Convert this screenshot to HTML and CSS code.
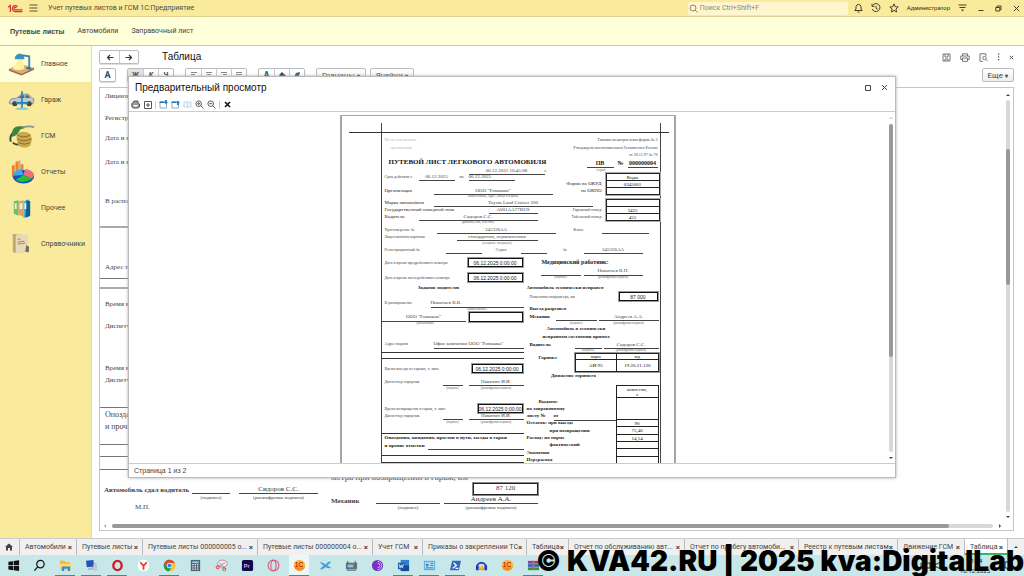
FILE: index.html
```html
<!DOCTYPE html>
<html lang="ru">
<head>
<meta charset="utf-8">
<title>Учет путевых листов и ГСМ</title>
<link rel="stylesheet" href="styles.css">
</head>
<body>
<header class="titlebar">
  <svg class="logo" viewBox="0 0 16 9"><g fill="none" stroke="#d9332e" stroke-width="1.2"><path d="M1 3.2 3.4 1.5V8"/><path d="M10.5 2.6A3 3 0 1 0 8 7.6H15.5"/><path d="M9.4 4A1.3 1.3 0 1 0 8.2 5.9H15.5"/></g></svg>
  <button class="plain" aria-label="Меню"><svg width="9" height="8" viewBox="0 0 9 8"><path d="M.5 1h8M.5 4h8M.5 7h8" stroke="#5b5640" fill="none"/></svg></button>
  <span class="app-name">Учет путевых листов и ГСМ 1С:Предприятие</span>
  <label class="search"><svg width="9" height="9" viewBox="0 0 9 9" fill="none" stroke="#8f8869"><circle cx="4" cy="4" r="3"/><path d="m6 6 2.5 2.5"/></svg><input type="text" placeholder="Поиск Ctrl+Shift+F" aria-label="Поиск"></label>
  <div class="title-tools">
    <button class="plain" aria-label="Уведомления"><svg width="9" height="10" viewBox="0 0 9 10" fill="none" stroke="#45412f"><path d="M.8 7.5h7.4L7 6V3.700Q6.500 1.500 4.500 1.300 2.500 1.500 2 3.700V6zM3.500 9h2"/></svg></button>
    <button class="plain" aria-label="История"><svg width="10" height="10" viewBox="0 0 10 10" fill="none" stroke="#45412f"><path d="M1.500 2.500A4 4 0 1 1 1.200 6M1 .8v2.500h2.500M5 2.800V5.200l1.800 1.200"/></svg></button>
    <button class="plain" aria-label="Избранное"><svg width="10" height="10" viewBox="0 0 10 10" fill="none" stroke="#45412f"><path d="m5 .9 1.200 2.800 3 .3-2.300 2 .7 3L5 7.400 2.400 9l.7-3L.8 4l3-.3z"/></svg></button>
    <span class="user">Администратор</span>
    <button class="plain" aria-label="Настройки"><svg width="9" height="8" viewBox="0 0 9 8"><path d="M.5 1h8M1.500 3.500h6" stroke="#45412f"/><path d="M3 5.500h3L4.500 7.500z" fill="#45412f"/></svg></button>
  </div>
  <div class="window-tools">
    <button class="plain" aria-label="Свернуть"><svg width="6" height="8" viewBox="0 0 6 8"><path d="M.5 6.500h5" stroke="#45412f"/></svg></button>
    <button class="plain" aria-label="Развернуть"><svg width="7" height="7" viewBox="0 0 7 7" fill="none" stroke="#45412f"><path d="M.8 2.500h4v3.500h-4zM2 2V1h4v3.500H5"/></svg></button>
    <button class="plain" aria-label="Закрыть"><svg width="7" height="7" viewBox="0 0 7 7"><path d="m1 1 5 5M6 1 1 6" stroke="#45412f"/></svg></button>
  </div>
</header>
<nav class="topnav"><a class="current" href="#lists">Путевые листы</a><a href="#cars">Автомобили</a><a href="#fuel">Заправочный лист</a></nav>

<main class="workspace">
  <nav class="sections">
    <a class="current" href="#main"><svg viewBox="0 0 28 24"><path d="m1 17 12-5 14 4-13 6z" fill="#dfab77"/><path d="m1 17 13 5v2L1 19zM14 22l13-6v2l-13 6z" fill="#9d6d46"/><path d="M11 7 5 17q6 3 12 0L15 7z" fill="#fff49b"/><path d="M12 1q-5 1-5 6h10q0-5-5-6z" fill="#3e8fc2"/><path d="M14 3l8 1v12" stroke="#4386ad" stroke-width="2" fill="none"/><path d="m19 16 5 1" stroke="#32698b" stroke-width="2"/></svg><span>Главное</span></a>
    <a href="#garage"><svg viewBox="0 0 28 24"><path d="m1 15 2-4 6-1 5-4h7l4 4 2 1-1 5H2z" fill="#c3c9ca" stroke="#8b9295"/><path d="m10 10 4-3h3v3zM18 7h3l2 3h-5z" fill="#536a78"/><circle cx="7" cy="16" r="2.600" fill="#3e4447"/><circle cx="22" cy="16" r="2.600" fill="#3e4447"/><path d="M14.500 3v18M8 15h13" stroke="#1687c6" stroke-width="1.700"/><path d="m7 22 3-2h9l3 2z" fill="#83c8dc"/></svg><span>Гараж</span></a>
    <a href="#gsm"><svg viewBox="0 0 28 24"><path d="M3 18Q1 12 6 8M5 19q7 5 8-3" stroke="#3d4c41" stroke-width="2" fill="none"/><path d="M4 9q1-7 7-7l6 0v2l-4 1-4 6-5 2z" fill="#3c853b"/><path d="M15 3q8-2 12 0" stroke="#8b9397" stroke-width="2" fill="none"/><path d="M9 10q7-5 14 0l2 5-2 7q-6 4-12 0L9 16z" fill="#caa84b"/><path d="M10 11q6 4 13 0M10 15q6 4 14 0M11 19q6 3 12 0" stroke="#826b2a" fill="none"/></svg><span>ГСМ</span></a>
    <a href="#reports"><svg viewBox="0 0 28 24"><path d="M4 5h3v12H4zM8 1h3v16H8zM13 4h3v11h-3z" fill="#f4811f"/><path d="M7 3h1v14H7zM11 0h2v16h-2z" fill="#b8b1a8"/><ellipse cx="16" cy="17" rx="11" ry="7" fill="#1650bd"/><path d="M16 15 5 16q0-5 9-7z" fill="#35a9f6"/><path d="m16 15 2-6q8 1 9 6l-2 4z" fill="#f36c7e"/><path d="m16 15 9 4q-9 6-17 1z" fill="#22bf38"/></svg><span>Отчеты</span></a>
    <a href="#other"><svg viewBox="0 0 28 24"><path d="m6 5 5-1v16l-5-2z" fill="#71bd6c"/><path d="m11 5 5-1v17l-5-2z" fill="#e2a35b"/><path d="m16 5 6-2v18l-6 1z" fill="#4eb6de"/><path d="m19 4 4 1v15l-5 2z" fill="#08639d"/><path d="M7 7h2v6H7zM12 7h3v6h-3zM17 7h2v6h-2z" fill="#e9f1dc"/></svg><span>Прочее</span></a>
    <a href="#refs"><svg viewBox="0 0 28 24"><path d="m5 2 14 1 3 17-16 1z" fill="#ac9565"/><path d="m7 3 14-1v17L7 22z" fill="#e9dab7"/><path d="M5 2h3v19l-3-1z" fill="#bda878"/><path d="m10 10 7-1M10 12l8-1M10 7l3 0" stroke="#9b8661"/><path d="m19 13 3 2-1 6-3-2z" fill="#716d5e"/></svg><span>Справочники</span></a>
  </nav>

  <section class="content">
    <div class="form-head">
      <div class="group"><button aria-label="Назад"><svg width="8" height="7" viewBox="0 0 8 7"><path d="M7.500 3.500h-6M4 1 1.500 3.500 4 6" stroke="#333" stroke-width="1.200" fill="none"/></svg></button><button aria-label="Вперед"><svg width="8" height="7" viewBox="0 0 8 7"><path d="M.5 3.500h6M4 1l2.500 2.500L4 6" stroke="#333" stroke-width="1.200" fill="none"/></svg></button></div>
      <h1>Таблица</h1>
      <div class="form-tools">
        <button class="plain" aria-label="Сохранить"><svg width="9" height="9" viewBox="0 0 9 9" fill="none" stroke="#777"><path d="M1 1h7v7H1zM3 1v3h3V1M3 8V6h3v2"/></svg></button>
        <button class="plain" aria-label="Печать"><svg width="10" height="9" viewBox="0 0 10 9" fill="none" stroke="#777"><path d="M2.500 3V.8h5V3M2 6.500H.8V3h8.400v3.500H8M2.500 5h5v3.300h-5z"/></svg></button>
        <button class="plain" aria-label="Просмотр"><svg width="9" height="9" viewBox="0 0 9 9" fill="none" stroke="#777"><path d="M4 8.300H1V.8h6v2"/><circle cx="5.500" cy="5" r="1.700"/><path d="m6.800 6.300 2 2"/></svg></button>
        <button class="plain" aria-label="Еще действия"><svg width="3" height="8" viewBox="0 0 3 8"><path d="M1 .5h1.200v1.200H1zM1 3.300h1.200v1.200H1zM1 6.100h1.200v1.200H1z" fill="#444"/></svg></button>
        <button class="plain" aria-label="Закрыть форму"><svg width="5" height="5" viewBox="0 0 5 5"><path d="m.8.8 3.400 3.400m0-3.400L.8 4.200" stroke="#555"/></svg></button>
      </div>
    </div>
    <div class="format-bar">
      <div class="group"><button class="font-a">A</button></div>
      <div class="group three"><button class="pressed">Ж</button><button><i>К</i></button><button><u>Ч</u></button></div>
      <div class="group four">
        <button aria-label="Влево"><svg width="6" height="7" viewBox="0 0 6 7"><path d="M0 .5h6M0 2.500h4M0 4.500h6M0 6.500h4" stroke="#888"/></svg></button>
        <button aria-label="По центру"><svg width="6" height="7" viewBox="0 0 6 7"><path d="M0 .5h6M1 2.500h4M0 4.500h6M1 6.500h4" stroke="#888"/></svg></button>
        <button aria-label="Вправо"><svg width="6" height="7" viewBox="0 0 6 7"><path d="M0 .5h6M2 2.500h4M0 4.500h6M2 6.500h4" stroke="#888"/></svg></button>
        <button aria-label="По ширине"><svg width="6" height="7" viewBox="0 0 6 7"><path d="M0 .5h6M0 2.500h6M0 4.500h6M0 6.500h6" stroke="#888"/></svg></button>
      </div>
      <div class="group three"><button class="font-a">A</button><button aria-label="Цвет фона"><svg width="8" height="8" viewBox="0 0 8 8"><path d="m1 4 3-3 3 3-3 3z" fill="#164f7c"/><circle cx="6.500" cy="4.500" r="1.200" fill="#d33"/></svg></button><button aria-label="Кисть"><svg width="8" height="8" viewBox="0 0 8 8"><path d="m1 6 2-4 4-1-1 4-4 2z" fill="#25608a"/></svg></button></div>
      <button class="drop">Границы <b>▾</b></button><button class="drop">Ячейки <b>▾</b></button>
      <button class="drop more">Еще <b>▾</b></button>
    </div>
    <div class="document">
      <div class="doc-body">
        <div class="doc-left">
          <p class="d12">Лицензионная</p><p class="d22">Регистрационный</p><p class="d20">Дата и время</p><p class="d24">Дата и время</p><p class="d39">В распоряжение</p><p class="d22 ruled thick-line"></p>
          <p class="d44">Адрес подачи</p><p class="d7 ruled"></p><p class="d10 ruled thick-line"></p><p class="d20">Время выезда</p><p class="d22">Диспетчер</p><p class="d42">Время возвр.</p><p class="d12">Диспетчер</p><p class="d23 ruled"></p><p class="d12 large">Опоздания</p><p class="d12 large">и прочие</p><p class="d13 ruled"></p><p class="d12 ruled"></p><p class="d13 ruled"></p>
        </div>
        <div class="doc-foot">
          <div class="foot-left">
            <b>Автомобиль сдал водитель</b><div class="sig"><span class="value"></span><small>(подпись)</small></div><div class="sig"><span class="value">Сидоров С.С.</span><small>(расшифровка подписи)</small></div>
            <span class="stamp">М.П.</span>
          </div>
          <div class="foot-right">
            <span class="odo">метра при возвращении в гараж, км</span><span class="odo-box">87 120</span>
            <b>Механик</b><div class="sig"><span class="value"></span><small>(подпись)</small></div><div class="sig"><span class="value">Андреев А.А.</span><small>(расшифровка подписи)</small></div>
          </div>
        </div>
      </div>
      <div class="vbar"><i class="up"></i><div class="track"><div class="thumb doc-thumb"></div></div><i class="down"></i></div>
      <div class="hbar"><i class="left"></i><div class="track"><div class="thumb"></div></div><i class="right"></i></div>
    </div>
  </section>

  <section class="dialog" role="dialog" aria-labelledby="dlg-title">
    <header class="dlg-head"><h2 id="dlg-title">Предварительный просмотр</h2>
      <button class="plain" aria-label="Развернуть окно"><svg width="6" height="6" viewBox="0 0 6 6"><path d="M.5.5h5v5h-5z" fill="none" stroke="#444"/></svg></button>
      <button class="plain" aria-label="Закрыть окно"><svg width="7" height="7" viewBox="0 0 7 7"><path d="m1 1 5 5M6 1 1 6" stroke="#444"/></svg></button>
    </header>
    <div class="dlg-tools">
      <button class="plain" aria-label="Печать"><svg width="9" height="9" viewBox="0 0 9 9"><path d="M2 2.500 3 1h4v2l1.500 1v3L7 8H2L.8 6.500v-3z" fill="#999" stroke="#555"/><path d="M2.500 5h4v1.500h-4z" fill="#fff"/></svg></button>
      <button class="plain" aria-label="Параметры страницы"><svg width="8" height="8" viewBox="0 0 8 8"><path d="M.5.5h7v7h-7zM4 2v4M2 4h4" fill="none" stroke="#555"/></svg></button>
      <span class="sep"></span>
      <button class="plain" aria-label="Следующая"><svg width="9" height="9" viewBox="0 0 9 9"><path d="M1 2h6.500v6H1z" fill="#fff" stroke="#8badc4"/><path d="M.5 1.500h5v1.500h-5z" fill="#2877ad"/><path d="M6 0h2v2h1L7 4.500 5 2h1z" fill="#2581c2"/></svg></button>
      <button class="plain" aria-label="Предыдущая"><svg width="9" height="9" viewBox="0 0 9 9"><path d="M1 2h6.500v6H1z" fill="#fff" stroke="#8badc4"/><path d="M.5 1.500h5v1.500h-5z" fill="#2877ad"/><path d="M6 5h2V3h1L7 .5 5 3h1z" fill="#2581c2"/></svg></button>
      <button class="plain" aria-label="Две страницы"><svg width="9" height="9" viewBox="0 0 9 9"><path d="M1 2h7v5H1zM4.500 2v5" fill="#f0f8fc" stroke="#b8d8e9"/></svg></button>
      <button class="plain" aria-label="Увеличить"><svg width="9" height="9" viewBox="0 0 9 9" fill="none" stroke="#53606b"><circle cx="3.700" cy="3.700" r="2.800"/><path d="m5.800 5.800 2.700 2.700M2.200 3.700h3M3.700 2.200v3"/></svg></button>
      <button class="plain" aria-label="Уменьшить"><svg width="9" height="9" viewBox="0 0 9 9" fill="none" stroke="#53606b"><circle cx="3.700" cy="3.700" r="2.800"/><path d="m5.800 5.800 2.700 2.700M2.200 3.700h3"/></svg></button>
      <span class="sep"></span>
      <button class="plain" aria-label="Закрыть просмотр"><svg width="7" height="7" viewBox="0 0 7 7"><path d="m1 1 5 5M6 1 1 6" stroke="#111" stroke-width="1.600"/></svg></button>
    </div>
    <div class="preview">
      <div class="canvas">
        <article class="paper"><div class="form"><div class="crop"></div>

          <div class="head">
            <div>
              <p class="r7 faint in">Место для штампа</p><p class="r8 faint in2">организации</p><p class="r6"></p>
              <p class="r10 title">ПУТЕВОЙ ЛИСТ ЛЕГКОВОГО АВТОМОБИЛЯ</p>
              <div class="row r6 g-stamp"><i></i><span class="f">06.12.2025 10:45:08</span><span>г.</span></div>
            </div>
            <div class="head-right">
              <p class="r7">Типовая межотраслевая форма № 3</p><p class="r8">Утверждена постановлением Госкомстата России</p><p class="r7">от 28.11.97 № 78</p>
              <div class="row r9 g-number"><b class="f">ПВ</b><b>№</b><b class="f">000000004</b></div><p class="cap serial">(серия)</p>
            </div>
          </div>

          <div class="with-codes">
            <div>
              <div class="row r7 g-period"><span>Срок действия с</span><span class="f">06.12.2025</span><span class="c">по</span><span class="f start">06.12.2025</span></div>
              <p class="r7 strong right">Форма по ОКУД</p>
              <div class="row r6 g-org"><span class="strong">Организация</span><span class="f">ООО "Ромашка"</span><span class="strong right">по ОКПО</span></div>
              <div class="row r6 g-org cap"><i></i><span>(наименование, адрес, номер телефона)</span></div>
            </div>
            <table class="codes"><tr class="thin"><td>Коды</td></tr><tr><td>0345001</td></tr><tr><td></td></tr></table>
          </div>

          <div class="with-codes">
            <div>
              <div class="row r7 g-brand"><span class="strong">Марка автомобиля</span><span class="f">Toyota Land Cruiser 200</span></div>
              <div class="row r7 g-plate"><span class="strong">Государственный номерной знак</span><span class="f">А001АА77RUS</span><span class="right">Гаражный номер</span></div>
              <div class="row r6 g-driver"><span class="strong">Водитель</span><span class="f">Сидоров С.С.</span><span class="right">Табельный номер</span></div>
              <div class="row r7 g-driver cap"><i></i><span>(фамилия, имя, отчество)</span></div>
            </div>
            <table class="codes"><tr><td></td></tr><tr><td>3425</td></tr><tr><td>455</td></tr></table>
          </div>

          <div class="row r7 g-licence"><span>Удостоверение №</span><span class="f">345326АА</span><span class="c">Класс</span><span class="f"></span></div>
          <div class="row r7 g-card"><span>Лицензионная карточка</span><span class="f">стандартная, ограниченная</span></div>
          <div class="row r6 g-card cap"><i></i><span>(ненужное зачеркнуть)</span></div>
          <div class="row r7 g-reg"><span>Регистрационный №</span><span class="f"></span><span class="c">Серия</span><span class="f"></span><span class="c">№</span><span class="f">345326АА</span></div>

          <div class="halves">
            <div>
              <div class="row r9 g-date"><span>Дата и время предрейсового осмотра</span><span class="box">06.12.2025 0:00:00</span></div>
              <p class="r6"></p>
              <div class="row r9 g-date"><span>Дата и время послерейсового осмотра</span><span class="box">06.12.2025 0:00:00</span></div>
              <p class="r2"></p><p class="r9 heading task">Задание водителю</p><p class="r5"></p>
              <div class="row r8 g-order"><span>В распоряжение</span><span class="f start">Никитаев В.В.</span></div>
              <div class="row r6 g-order cap"><i></i><span>(наименование)</span></div>
              <div class="row r8 g-company"><span class="f">ООО "Ромашка"</span><i></i><span class="box"></span></div>
              <div class="row r5 g-company cap"><span>(организация)</span></div><p class="r14"></p>
              <div class="row r8 g-address"><span>Адрес подачи</span><span class="f start">Офис компании ООО "Ромашка"</span></div>
              <p class="r6 line"></p><p class="r6 line"></p><p class="r5"></p>
              <div class="row r8 g-leave"><span>Время выезда из гаража, ч. мин.</span><span class="box">06.12.2025 0:00:00</span></div><p class="r6"></p>
              <div class="row r7 g-dispatch"><span>Диспетчер нарядчик</span><span class="f"></span><i></i><span class="f">Никитин И.И.</span></div>
              <div class="row r5 g-dispatch cap"><i></i><span>(подпись)</span><i></i><span>(расшифровка подписи)</span></div><p class="r14"></p>
              <div class="row r8 g-return"><span>Время возвращения в гараж, ч. мин.</span><span class="box">06.12.2025 0:00:00</span></div>
              <div class="row r7 g-dispatch"><span>Диспетчер нарядчик</span><span class="f"></span><i></i><span class="f">Никитин И.И.</span></div>
              <div class="row r5 g-dispatch cap"><i></i><span>(подпись)</span><i></i><span>(расшифровка подписи)</span></div>
              <p class="r10 line"></p>
              <p class="r8 heading in">Опоздания, ожидания, простои в пути, заезды в гараж</p>
              <div class="row r7 g-notes"><b class="heading">и прочие отметки</b><span class="f"></span></div>
              <p class="r7 line"></p><p class="r7 line"></p>
            </div>
            <div>
              <p class="r8 heading medic">Медицинский работник:</p>
              <div class="row r8 g-medic"><i></i><span class="f"></span><i></i><span class="f">Никитаев В.Н.</span></div>
              <div class="row r5 g-medic cap"><i></i><span>(подпись)</span><i></i><span>(расшифровка подписи)</span></div><p class="r5"></p>
              <p class="r8 heading">Автомобиль технически исправен</p>
              <div class="row r8 g-odo"><span>Показания спидометра, км</span><span class="box">87 000</span></div><p class="r5"></p>
              <p class="r8 heading in">Выезд разрешен</p>
              <div class="row r7 g-mechanic"><b>Механик</b><span class="f"></span><i></i><span class="f">Андреев А.А.</span></div>
              <div class="row r5 g-mechanic cap"><i></i><span>(подпись)</span><i></i><span>(расшифровка подписи)</span></div>
              <p class="r8 heading accept">Автомобиль в технически</p><p class="r8 heading accept">исправном состоянии принял</p>
              <div class="row r6 g-accept"><b>Водитель</b><span class="f"></span><i></i><span class="f">Сидоров С.С.</span></div>
              <div class="row r6 g-accept cap"><i></i><span>(подпись)</span><i></i><span>(расшифровка подписи)</span></div>
              <div class="fuel"><b class="heading">Горючее</b><table class="framed"><tr class="fh"><td>марка</td><td>код</td></tr><tr><td>АИ-95</td><td>19.20.21.120</td></tr></table></div>
              <p class="r8 heading move">Движение горючего</p><p class="r5"></p>
              <div class="stock">
                <div class="stock-labels heading">
                  <p class="r12"></p><p class="r8 mid">Выдано:</p><p class="r7">по заправочному</p><p class="r7 listno"><span>листу №</span><span class="f start">от</span></p>
                  <p class="r7">Остаток: при выезде</p><p class="r8 sub">при возвращении</p><p class="r7">Расход: по норме</p><p class="r7 sub">фактический</p><p class="r8">Экономия</p><p class="r7">Перерасход</p>
                </div>
                <table><tr class="q"><td>количество,<br>л</td></tr><tr class="tall"><td></td></tr><tr><td>90</td></tr><tr class="eight"><td>75,46</td></tr><tr><td>14,54</td></tr><tr><td></td></tr><tr class="eight"><td></td></tr><tr><td></td></tr></table>
              </div>
            </div>
          </div>
        </div></article>
      </div>
      <div class="vbar"><i class="up dim"></i><div class="track"><div class="thumb dlg-thumb"></div></div><i class="down"></i></div>
    </div>
    <footer class="status">Страница 1 из 2</footer>
  </section>
</main>

<nav class="tabs">
  <a href="#home" aria-label="Начало"><svg width="8" height="8" viewBox="0 0 8 8"><path d="M0 4 4 .5 8 4H7v3.500H5V5H3v2.500H1V4z" fill="#444"/></svg></a>
  <a href="#t1"><span>Автомобили</span><b>×</b></a><a href="#t2"><span>Путевые листы</span><b>×</b></a><a href="#t3"><span>Путевые листы 000000005 о...</span><b>×</b></a><a href="#t4"><span>Путевые листы 000000004 о...</span><b>×</b></a><a href="#t5"><span>Учет ГСМ</span><b>×</b></a><a href="#t6"><span>Приказы о закреплении ТС</span><b>×</b></a><a href="#t7"><span>Таблица</span><b>×</b></a><a href="#t8"><span>Отчет по обслуживанию авт...</span><b>×</b></a><a href="#t9"><span>Отчет по пробегу автомоби...</span><b>×</b></a><a href="#t10"><span>Реестр к путевым листам</span><b>×</b></a><a href="#t11"><span>Движение ГСМ</span><b>×</b></a><a class="current" href="#t12"><span>Таблица</span><b>×</b></a>
  <button class="plain" aria-label="Список вкладок"><i class="up"></i></button>
</nav>

<footer class="taskbar">
  <button aria-label="Пуск"><svg viewBox="0 0 14 14"><path d="m1.500 3 5-.7v4.500h-5zM7.200 2.200 13 1.400v5.400H7.200zM1.500 7.500h5V12l-5-.8zM7.200 7.500H13v5.400l-5.800-.8z" fill="#111"/></svg></button>
  <button aria-label="Поиск"><svg viewBox="0 0 14 14" fill="none" stroke="#111" stroke-width="1.300"><circle cx="8" cy="5.500" r="4"/><path d="m5 8.500-3.500 4"/></svg></button>
  <button class="run" aria-label="Проводник"><svg viewBox="0 0 14 14"><path d="M1 2h5l1 1.500h5V12H1z" fill="#f2b632"/><path d="M1 5h12v7H1z" fill="#ffd970"/><path d="M3 8h9v5H9.500v-2.500h-4V13H3z" fill="#2d8fd5"/></svg></button>
  <button class="run" aria-label="Удаленный рабочий стол"><svg viewBox="0 0 14 14"><path d="m1 2 8-1 1 7-8 1z" fill="#2454ba"/><path d="m3 10 5-1 1 2-5 1z" fill="#aab7c5"/><path d="M9 5h3v7H9z" fill="#cbd3dc" stroke="#8190a2" stroke-width=".5"/><circle cx="11" cy="11" r="2.300" fill="#c7cbd1"/></svg></button>
  <button class="run" aria-label="Opera"><svg viewBox="0 0 14 14"><ellipse cx="7" cy="7" rx="4.500" ry="5" fill="none" stroke="#d91928" stroke-width="2.600"/></svg></button>
  <button aria-label="Yandex"><svg viewBox="0 0 14 14"><circle cx="7" cy="7" r="6.300" fill="#fff"/><path d="m3.500 3.500 3.500 4 3.500-4M7 7.500v4" stroke="#f23b28" stroke-width="2" fill="none"/></svg></button>
  <button class="run" aria-label="Chrome"><svg viewBox="0 0 14 14"><circle cx="7" cy="7" r="6.300" fill="#f7c630"/><path d="M1.600 3.800A6.300 6.300 0 0 1 12.700 4.200H7L4.500 8z" fill="#de4436"/><path d="M1.600 3.800A6.300 6.300 0 0 0 6.500 13.300L9.500 8.500 4.500 8z" fill="#219b55"/><circle cx="7" cy="7" r="2.900" fill="#fff"/><circle cx="7" cy="7" r="2.200" fill="#397fe2"/></svg></button>
  <button aria-label="Калькулятор"><svg viewBox="0 0 14 14"><path d="M2 1h10v12H2z" fill="#52616b"/><path d="M3.500 2.500h7v2h-7z" fill="#7fd3ed"/><path d="M3.500 6h7M3.500 8.500h7M3.500 11h7" stroke="#e7eef1" stroke-width="1.400" stroke-dasharray="1.500 1"/></svg></button>
  <button aria-label="Ножницы"><svg viewBox="0 0 14 14"><ellipse cx="8" cy="5" rx="5.300" ry="3.800" fill="#e8eef0" stroke="#d77a83"/><path d="M2 9 11 4M5 4l6 7" stroke="#8a9399"/><circle cx="3" cy="9" r="1.700" fill="none" stroke="#d33b43"/><circle cx="10" cy="11" r="1.700" fill="none" stroke="#d33b43"/></svg></button>
  <button aria-label="Premiere"><svg viewBox="0 0 14 14"><rect x="1" y="1" width="12" height="12" rx="2" fill="#14084a"/><text x="3" y="10" class="ico-pr">Pr</text></svg></button>
  <button aria-label="Opera GX"><svg viewBox="0 0 14 14" fill="none" stroke="#e4587a" stroke-width="1.200"><circle cx="7" cy="7" r="5.800"/><ellipse cx="7" cy="7" rx="2.800" ry="5.500"/></svg></button>
  <button class="run active" aria-label="1С"><svg viewBox="0 0 14 14"><circle cx="7" cy="7" r="6.200" fill="#f8b83b"/><path d="M1.500 9a6.200 6.200 0 0 0 11 0" fill="#ef8a2b"/><text x="2" y="9" class="ico-1c">1С</text></svg></button>
  <button aria-label="Инструмент"><svg viewBox="0 0 14 14"><path d="M1 3q4 1 6 3 3-4 6-3-1 2-4 4 3 1 4 3-4 0-6-1-3 3-6 2 2-2 4-4-3-1-4-4z" fill="#4b9ed3"/></svg></button>
  <button aria-label="Терминал"><svg viewBox="0 0 14 14"><path d="M1 4h12v7H1z" fill="#64717b"/><path d="M3 2v3M11 2v3M2 12h10" stroke="#4a535a"/><path d="M3 6h6v3H3z" fill="#80c8ea"/></svg></button>
  <button aria-label="Tor"><svg viewBox="0 0 14 14"><circle cx="7" cy="7" r="6" fill="#7831c1"/><path d="M7 2.500a4.500 4.500 0 0 1 0 9M7 4.500a2.500 2.500 0 0 1 0 5" stroke="#dbb7f3" fill="none"/></svg></button>
  <button class="run" aria-label="Word"><svg viewBox="0 0 14 14"><path d="M4 1h9v12H4z" fill="#2f80d1"/><path d="M4 7h9v6H4z" fill="#174a94"/><path d="M1 4h7v7H1z" fill="#1c5bb5"/><path d="m2.300 5.500 1 4 1.200-3 1.200 3 1-4" stroke="#fff" stroke-width=".8" fill="none"/></svg></button>
  <button class="run" aria-label="Панель"><svg viewBox="0 0 14 14"><path d="M1 2h12v10H1z" fill="#54afe3"/><path d="M2 3.500h10v7H2z" fill="#b8e4f8"/><circle cx="4.500" cy="6.500" r="1.700" fill="#358cc4"/><path d="M8 5h3M8 7h3M3 9.500h8" stroke="#287aaa"/></svg></button>
  <button class="run" aria-label="PowerShell"><svg viewBox="0 0 14 14"><path d="M3.500 2H13l-2.500 10H1z" fill="#3168bd"/><path d="m5 4 3 3-4 3M7 10h3" stroke="#fff" stroke-width="1.300" fill="none"/></svg></button>
  <button aria-label="Audacity"><svg viewBox="0 0 14 14"><path d="M2 9a5 5 0 0 1 10 0" fill="none" stroke="#2443ce" stroke-width="2"/><path d="M1 7h3v5H1zM10 7h3v5h-3z" fill="#2038bb"/><path d="m4 10 1.500-3 1 4L8 6l1 4 1-1v3H4z" fill="#f6a325"/></svg></button>
  <button aria-label="1С Предприятие"><svg viewBox="0 0 14 14"><circle cx="7" cy="7" r="6.200" fill="#f8b83b"/><path d="M1.500 9a6.200 6.200 0 0 0 11 0" fill="#ef8a2b"/><text x="2" y="9" class="ico-1c">1С</text></svg></button>
  <button class="run" aria-label="WinRAR"><svg viewBox="0 0 14 14"><path d="M1 2h12v3H1z" fill="#943b94"/><path d="M1 5.500h12v3H1z" fill="#3765b5"/><path d="M1 9h12v3H1z" fill="#3a8d4a"/><path d="M6 2h2v10H6z" fill="#a27a46"/></svg></button>
  <div class="tray"><svg width="26" height="9" viewBox="0 0 26 9" fill="none" stroke="#222"><path d="M1 2h9v5H1zM15 3h2l3-2v7l-3-2h-2zM22 2q2 2.500 0 5"/></svg><time>21:04<br>16.12.2025</time><svg width="9" height="9" viewBox="0 0 9 9" fill="none" stroke="#222"><path d="M1 1h7v6H5L3.500 8.500V7H1z"/></svg></div>
</footer>
<div class="watermark">© KVA42.RU | 2025 kva:DigitalLab</div>
</body>
</html>
```

FILE: styles.css
```css
* { box-sizing: border-box; }
body { margin: 0; height: 100vh; display: flex; flex-direction: column; overflow: hidden; position: relative; font: 7px/9px Roboto, "Liberation Sans", Arial, sans-serif; color: #444; background: #fff; }
a { color: inherit; text-decoration: none; }
p, h1, h2 { margin: 0; }
button { font: inherit; color: inherit; margin: 0; padding: 0; cursor: pointer; }
.plain { border: 0; background: none; display: flex; align-items: center; justify-content: center; }
svg { display: block; flex: none; }

.titlebar { height: 17px; flex: none; display: flex; align-items: center; background: #faea9c; border-bottom: 1px solid #ddd093; padding: 0 4px 0 7px; }
.logo { width: 16px; height: 9px; margin-right: 6px; }
.app-name { margin-left: 10px; flex: 1; white-space: nowrap; color: #4f4a36; }
.search { width: 160px; height: 13px; display: flex; align-items: center; gap: 2px; padding: 0 1px; background: #fff5cf; border-radius: 2px; }
.search input { flex: 1; min-width: 0; border: 0; padding: 0; background: none; font: inherit; outline: 0; }
.search input::placeholder { color: #8f8869; opacity: 1; }
.title-tools { display: flex; align-items: center; gap: 8px; margin-left: 6px; }
.user { font: 6px/9px "Liberation Sans", Arial, sans-serif; color: #222; }
.window-tools { display: flex; align-items: center; gap: 11px; margin-left: 11px; }
.topnav { height: 29px; flex: none; display: flex; align-items: center; gap: 13px; padding: 0 10px; background: #ffffd9; border-bottom: 1px solid #c8c6b4; }
.topnav .current { font-family: "Liberation Sans", Arial, sans-serif; font-weight: bold; }

.workspace { flex: 1; min-height: 0; display: flex; position: relative; }
.sections { width: 92px; flex: none; background: #faea9c; border-right: 1px solid #e7dba5; }
.sections a { height: 36px; display: flex; align-items: center; gap: 6px; padding-left: 8px; }
.sections svg { width: 27px; height: 24px; }
.sections .current { background: #ffffd9; }

.content { flex: 1; min-width: 0; display: flex; flex-direction: column; padding: 4px 10px 7px 7px; }
.form-head { height: 14px; flex: none; display: flex; align-items: center; }
.form-head h1 { font: 10px/14px "Liberation Sans", Arial, sans-serif; color: #111; margin-left: 23px; flex: 1; }
.form-tools { display: flex; align-items: center; gap: 9px; }
.group { display: flex; border: 1px solid #bbb; border-radius: 2px; box-shadow: 0 1px 1px #ddd; background: #fff; }
.group button { width: 19px; height: 12px; border: 0; border-left: 1px solid #ccc; background: none; display: flex; align-items: center; justify-content: center; }
.group button:first-child { border-left: 0; }
.format-bar { height: 14px; flex: none; margin: 4px 0 5px; display: flex; gap: 11px; font-weight: bold; }
.format-bar .group button { width: 15px; height: 12px; }
.format-bar .group .pressed { background: #e2e2e2; }
.font-a { color: #164f7c; font-size: 9px; font-weight: bold; }
.drop { height: 14px; padding: 0 5px; border: 1px solid #bbb; border-radius: 2px; background: linear-gradient(#fff, #eee); font-size: 8px; font-weight: normal; }
.drop b { font-size: 6px; }
.drop + .drop { margin-left: -7px; }
.format-bar .more { margin-left: auto; }

.document { flex: 1; min-height: 0; display: grid; grid-template: minmax(0, 1fr) 6px / minmax(0, 1fr) 8px; border: 1px solid #c4c4c4; padding: 1px 0; }
.doc-body { overflow: hidden; display: flex; flex-direction: column; justify-content: space-between; font: 7px/9px "Liberation Serif", serif; color: #444; }
.doc-left { width: 31px; flex: none; overflow: hidden; white-space: nowrap; margin-bottom: -8px; }
.doc-left p { display: flex; align-items: flex-end; padding-left: 5px; }
.d7 { height: 7px; } .d10 { height: 10px; } .d12 { height: 12px; } .d13 { height: 13px; } .d20 { height: 20px; }
.d22 { height: 22px; } .d23 { height: 23px; } .d24 { height: 24px; } .d39 { height: 39px; } .d42 { height: 42px; } .d44 { height: 44px; }
.doc-left .ruled { border-bottom: 1px solid #777; }
.doc-left .thick-line { border-bottom: 2px solid #aaa; }
.doc-left .large { font-size: 8px; line-height: 10px; }
.doc-foot { display: flex; align-items: flex-end; height: 50px; flex: none; }
.foot-left { width: 231px; display: grid; grid-template: 18px 1fr / 82px 38px 82px; column-gap: 6px; padding-left: 4px; height: 38px; }
.foot-left .sig:nth-of-type(2) { margin-left: 3px; }
.foot-left > b { padding-top: 1px; white-space: nowrap; }
.foot-left .sig { line-height: 9px; }
.stamp { padding-left: 31px; }
.sig { display: flex; flex-direction: column; text-align: center; }
.value { height: 9px; flex: none; border-bottom: 1px solid #444; color: #333; }
.sig small { font-size: 5px; line-height: 8px; white-space: nowrap; }
.foot-right { display: grid; grid-template: 22px 20px / 41px 64px 94px; column-gap: 4px; height: 50px; }
.foot-right > b { padding-top: 2px; }
.odo { grid-column: 1 / 3; font-size: 9px; line-height: 8px; white-space: nowrap; }
.odo-box { border: 1px solid #222; box-shadow: 0 0 0 1px #888; width: 65px; height: 12px; margin-top: 10px; justify-self: end; text-align: center; }

.track { flex: 1; background: #d8d8d8; border-radius: 2px; }
.thumb { background: #999; border-radius: 2px; }
.vbar { width: 6px; display: flex; flex-direction: column; align-items: center; gap: 4px; padding: 5px 0; }
.vbar .track { width: 4px; }
.vbar .dim { opacity: .3; }
.doc-thumb { height: 33%; margin-top: 49px; }
.dlg-thumb { height: 71%; }
.hbar { display: flex; align-items: center; gap: 6px; padding: 0 4px; }
.hbar .track { height: 4px; }
.hbar .thumb { height: 4px; width: 95%; }
.up, .down, .left, .hbar .right { width: 0; height: 0; flex: none; border: 2px solid transparent; }
.up { border-bottom-color: #444; border-top: 0; }
.down { border-top-color: #444; border-bottom: 0; }
.left { border-right-color: #aaa; border-left: 0; }
.hbar .right { border-left-color: #444; border-right: 0; }

.dialog { position: absolute; top: 30px; right: 128px; bottom: 60px; left: 128px; display: flex; flex-direction: column; background: #fff; border: 1px solid #bbb; box-shadow: 0 0 3px #aaa; }
.dlg-head { height: 21px; flex: none; display: flex; align-items: center; gap: 10px; padding: 0 7px 0 6px; }
.dlg-head h2 { flex: 1; font: 10px/14px "Liberation Sans", Arial, sans-serif; color: #111; }
.dlg-tools { height: 14px; flex: none; display: flex; align-items: center; gap: 3px; padding: 0 2px; border-bottom: 1px solid #ccc; }
.dlg-tools .plain { width: 9px; }
.sep { width: 1px; height: 8px; background: #ccc; }
.preview { flex: 1; min-height: 0; display: flex; padding-right: 1px; }
.preview .vbar { padding: 5px 0 4px; gap: 5px; }
.canvas { flex: 1; overflow: hidden; display: flex; justify-content: center; padding-top: 3px; }
.status { height: 14px; flex: none; border-top: 1px solid #ccc; padding: 0 5px; font: 7px/13px "Liberation Sans", Arial, sans-serif; }

.paper { width: 336px; height: 475px; flex: none; margin-right: 2px; padding: 7px 13px 0 39px; border: 2px solid #a5a5a5; border-top-width: 1px; font: 4px/7px "Liberation Serif", serif; color: #444; }
.paper p, .paper span, .paper b { white-space: nowrap; }
.form { border: solid #444; border-width: 0 1px; height: 460px; }
.crop { height: 1px; margin: 0 -9px 3px -33px; background: #333; }
.form::before { content: ""; display: block; height: 9px; }
.r2 { height: 2px; } .r5 { height: 5px; } .r6 { height: 6px; } .r7 { height: 7px; } .r8 { height: 8px; }
.r9 { height: 9px; } .r10 { height: 10px; } .r12 { height: 12px; } .r14 { height: 14px; }
.r8, .r9 { line-height: 9px; }
.row { display: grid; }
.row > * { min-width: 0; }
.row > :first-child:not(.f):not(.box) { padding-left: 3px; }
.f { border-bottom: 1px solid #444; text-align: center; font-size: 5px; }
.start { text-align: left; }
.c { text-align: center; }
.right { text-align: right; }
.in { padding-left: 3px; }
.in2 { padding-left: 9px; }
.faint { color: #bbb; }
.strong { font-size: 5px; color: #222; }
.line { border-bottom: 1px solid #333; }
.heading { font-weight: bold; font-size: 5px; line-height: 8px; color: #222; }
.title { font-size: 7px; line-height: 10px; font-weight: bold; padding-left: 7px; color: #111; }
.paper .cap { font-size: 3px; line-height: 6px; text-align: center; color: #666; }
.box { border: 1px solid #111; box-shadow: 0 0 0 1px #999; display: flex; align-items: center; justify-content: center; font: 5px/6px "Liberation Sans", Arial, sans-serif; color: #222; margin: 0 1px; }
.head { display: grid; grid-template-columns: 1fr 97px; height: 37px; }
.head-right { text-align: right; padding-right: 2px; }
.head-right .r9 { margin-top: 1px; font-size: 6px; line-height: 8px; color: #222; }
.head-right .f { font-size: 6px; }
.head-right .serial { width: 77px; line-height: 4px; }
.g-stamp { grid-template-columns: 87px 76px 10px; }
.g-number { grid-template-columns: 27px 14px 30px; justify-content: end; text-align: center; }
.with-codes { display: grid; grid-template-columns: 1fr 54px; column-gap: 4px; }
.codes { height: 20px; box-shadow: 0 0 0 1px #aaa; }
.codes tr { height: 7px; }
.paper table { border-collapse: collapse; width: 100%; font-size: 5px; line-height: 5px; color: #111; text-align: center; }
.paper td { border: 1px solid #222; padding: 0; }
.framed { box-shadow: 0 0 0 1px #999; }
.g-period { grid-template-columns: 37px 36px 14px 46px; }
.g-org { grid-template-columns: 52px 119px 1fr; }
.g-brand { grid-template-columns: 52px 159px; }
.g-plate { grid-template-columns: 107px 49px 1fr; }
.g-driver { grid-template-columns: 37px 119px 1fr; }
.g-licence { grid-template-columns: 55px 119px 46px 47px; }
.g-card { grid-template-columns: 75px 81px; }
.g-reg { grid-template-columns: 64px 36px 39px 26px 37px 59px; }
.halves { display: grid; grid-template-columns: 142px 132px; column-gap: 3px; margin-top: 5px; }
.g-date { grid-template-columns: 1fr 57px; line-height: 9px; }
.g-order { grid-template-columns: 49px 1fr; }
.g-company { grid-template-columns: 84px 2px 56px; }
.g-address { grid-template-columns: 52px 1fr; }
.g-leave { grid-template-columns: 1fr 53px; }
.g-return { grid-template-columns: 1fr 47px; }
.g-dispatch { grid-template-columns: 61px 20px 6px 55px; }
.g-notes { grid-template-columns: 46px 1fr; }
.g-medic { grid-template-columns: 14px 40px 3px 59px; }
.g-odo { grid-template-columns: 1fr 41px; }
.g-mechanic { grid-template-columns: 29px 41px 2px 60px; }
.g-accept { grid-template-columns: 48px 27px 2px 55px; }
.task { text-align: center; padding-right: 28px; }
.medic { padding-left: 15px; font-size: 6px; }
.accept { text-align: center; padding-right: 33px; }
.move { text-align: center; padding-right: 38px; }
.g-mechanic b, .g-accept b { color: #111; font-size: 5px; }
.fuel { display: grid; grid-template-columns: 48px 84px; height: 19px; }
.fuel > b { padding: 1px 0 0 12px; }
.fuel td { width: 50%; }
.fuel .fh { height: 6px; font-size: 4px; }
.stock { display: grid; grid-template-columns: 89px 43px; }
.stock tr { height: 7px; }
.stock .q { height: 12px; font-size: 4px; }
.stock .tall { height: 22px; }
.stock .eight { height: 8px; }
.mid { padding-left: 12px; }
.sub { padding-left: 23px; }
.listno { display: grid; grid-template-columns: 27px 1fr; }

.tabs { height: 17px; flex: none; display: grid; grid-template-columns: 20px 57fr 66fr 115fr 115fr 50fr 104fr 42fr 116fr 114fr 99fr 67fr 43fr 16px; background: #f0f0f0; border-top: 1px solid #ccc; }
.tabs a { min-width: 0; display: flex; align-items: center; justify-content: space-between; padding: 0 4px 0 5px; border-right: 1px solid #bbb; white-space: nowrap; }
.tabs a b { font-size: 8px; }
.tabs .current { background: #fff; box-shadow: inset 0 -2px #37b56c; }
.taskbar { height: 21px; flex: none; display: flex; background: #c8e7e8; }
.taskbar button { width: 20px; margin-left: 3px; margin-right: 3px; border: 0; border-bottom: 1px solid transparent; background: none; display: flex; justify-content: center; align-items: center; }
.taskbar button svg { width: 13px; height: 13px; }
.taskbar .run { border-bottom-color: #607f83; }
.taskbar .active { background: #edf7f7; }
.ico-pr { font: bold 6px "Liberation Sans", sans-serif; fill: #c5b5ff; }
.ico-1c { font: bold 7px "Liberation Sans", sans-serif; fill: #c8231c; }
.tray { margin-left: auto; display: flex; align-items: center; gap: 14px; padding-right: 11px; color: #222; }
.tray time { text-align: center; font-size: 6px; line-height: 10px; }
.watermark { position: absolute; right: 0; bottom: 0; font: 900 28px/29px Inter, "Liberation Sans", sans-serif; font-optical-sizing: none; color: #000; white-space: nowrap; pointer-events: none; }
```
